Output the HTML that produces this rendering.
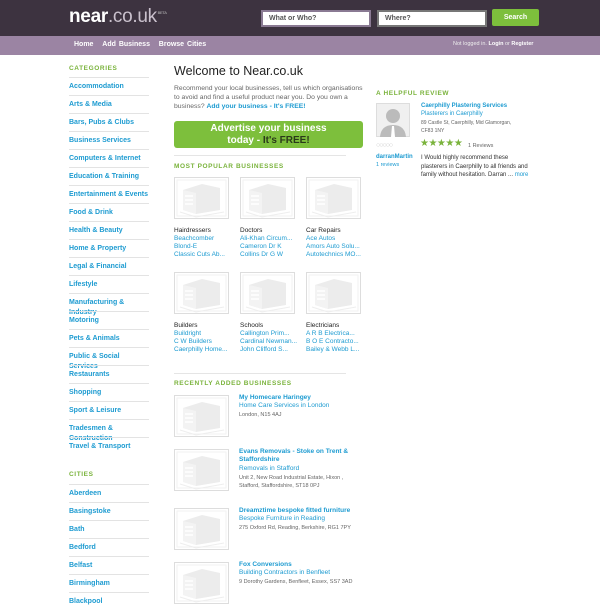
<!DOCTYPE html><html><head><style>
*{margin:0;padding:0;box-sizing:border-box}
body{width:600px;height:600px;overflow:hidden;background:#fff;font-family:"Liberation Sans",Arial,sans-serif;font-size:7px;color:#333;position:relative}
.a{position:absolute}
.hdr{left:0;top:0;width:600px;height:36px;background:#3d3340}
.nav{left:0;top:36px;width:600px;height:19px;background:#9b84a3}
.blue{color:#1d9bd1}
.sb{left:69px;width:80px}
.sb div{position:absolute;left:0;width:80px;font-weight:bold;color:#1d9bd1;font-size:7px;line-height:10px;white-space:normal}
.ln{position:absolute;left:69px;width:80px;height:1px;background:#e3e3e3}
.green{color:#7ab33c;font-weight:bold;font-size:6.5px;letter-spacing:.6px}
.t{position:absolute;font-size:6.5px;line-height:8px;white-space:nowrap}
</style></head><body>
<div class="a hdr"></div>
<div class="a" style="left:69px;top:6px;font-size:19px;color:#fff;letter-spacing:-.3px"><b>near</b><span style="color:#c9c0cc">.co.uk</span><sup style="font-size:4px;color:#bbb;vertical-align:top;position:relative;top:4px"> BETA</sup></div>
<div class="a" style="left:261px;top:10px;width:110px;height:17px;background:#fff;border:2px solid #8a7a93;font-size:7px;font-weight:bold;color:#555;padding:3px 6px">What or Who?</div>
<div class="a" style="left:377px;top:10px;width:110px;height:17px;background:#fff;border:2px solid #777;font-size:7px;font-weight:bold;color:#555;padding:3px 6px">Where?</div>
<div class="a" style="left:492px;top:9px;width:47px;height:17px;background:#7dbf3c;border-radius:2px;color:#fff;font-weight:bold;font-size:7px;text-align:center;line-height:17px">Search</div>
<div class="a nav"></div>
<div class="a" style="left:74px;top:41px;color:#fff;font-weight:bold;font-size:7px;word-spacing:1px">Home &nbsp;&nbsp;Add Business &nbsp;&nbsp;Browse Cities</div>
<div class="a" style="left:453px;top:41px;color:#eee;font-size:5.5px">Not logged in. <b style="color:#fff">Login</b> or <b style="color:#fff">Register</b></div>

<div class="a green" style="left:69px;top:65px">CATEGORIES</div>
<div class="a sb" style="top:0">
<div style="top:82px">Accommodation</div><div style="top:100px">Arts &amp; Media</div><div style="top:118px">Bars, Pubs &amp; Clubs</div><div style="top:136px">Business Services</div><div style="top:154px">Computers &amp; Internet</div><div style="top:172px">Education &amp; Training</div><div style="top:190px">Entertainment &amp; Events</div><div style="top:208px">Food &amp; Drink</div><div style="top:226px">Health &amp; Beauty</div><div style="top:244px">Home &amp; Property</div><div style="top:262px">Legal &amp; Financial</div><div style="top:280px">Lifestyle</div><div style="top:298px">Manufacturing &amp; Industry</div><div style="top:316px">Motoring</div><div style="top:334px">Pets &amp; Animals</div><div style="top:352px">Public &amp; Social Services</div><div style="top:370px">Restaurants</div><div style="top:388px">Shopping</div><div style="top:406px">Sport &amp; Leisure</div><div style="top:424px">Tradesmen &amp; Construction</div><div style="top:442px">Travel &amp; Transport</div>
<div style="top:489px">Aberdeen</div><div style="top:507px">Basingstoke</div><div style="top:525px">Bath</div><div style="top:543px">Bedford</div><div style="top:561px">Belfast</div><div style="top:579px">Birmingham</div><div style="top:597px">Blackpool</div>
</div>
<div class="ln" style="top:77px"></div><div class="ln" style="top:95px"></div><div class="ln" style="top:113px"></div><div class="ln" style="top:131px"></div><div class="ln" style="top:149px"></div><div class="ln" style="top:167px"></div><div class="ln" style="top:185px"></div><div class="ln" style="top:203px"></div><div class="ln" style="top:221px"></div><div class="ln" style="top:239px"></div><div class="ln" style="top:257px"></div><div class="ln" style="top:275px"></div><div class="ln" style="top:293px"></div><div class="ln" style="top:311px"></div><div class="ln" style="top:329px"></div><div class="ln" style="top:347px"></div><div class="ln" style="top:365px"></div><div class="ln" style="top:383px"></div><div class="ln" style="top:401px"></div><div class="ln" style="top:419px"></div><div class="ln" style="top:437px"></div>
<div class="a green" style="left:69px;top:471px">CITIES</div>
<div class="ln" style="top:484px"></div><div class="ln" style="top:502px"></div><div class="ln" style="top:520px"></div><div class="ln" style="top:538px"></div><div class="ln" style="top:556px"></div><div class="ln" style="top:574px"></div><div class="ln" style="top:592px"></div>

<div class="a" style="left:174px;top:64px;font-size:12.5px;color:#222">Welcome to Near.co.uk</div>
<div class="a" style="left:174px;top:84px;width:192px;font-size:6.8px;line-height:9px;color:#666">Recommend your local businesses, tell us which organisations to avoid and find a useful product near you. Do you own a business? <b class="blue">Add your business - It's FREE!</b></div>
<div class="a" style="left:174px;top:121px;width:189px;height:27px;background:#7dbf3c;border-radius:3px;color:#fff;font-weight:bold;font-size:10px;line-height:11.5px;text-align:center;padding-top:2px">Advertise your business<br>today - <span style="color:#2a3a1a">It's FREE!</span></div>
<div class="a" style="left:174px;top:155px;width:172px;height:1px;background:#e5e5e5"></div>
<div class="a green" style="left:174px;top:163px">MOST POPULAR BUSINESSES</div>

<svg width="0" height="0" style="position:absolute"><defs><g id="b"><rect x="0.5" y="0.5" width="54" height="41" fill="#fff" stroke="#ddd"/><rect x="3" y="3" width="49" height="36" fill="none" stroke="#f2f2f2"/><path d="M9 13 L28 7 L46 11 L46 33 L22 37 L9 33 Z" fill="#ececec"/><path d="M9 13 L22 16 L22 37 L9 33 Z" fill="#f3f3f3"/><path d="M11 19h8M11 23h8M11 27h8" stroke="#fff" stroke-width="1.5"/><path d="M6 35 L22 40 L50 35" stroke="#eee" fill="none"/></g></defs></svg>
<svg class="a" style="left:174px;top:177px" width="55" height="42"><use href="#b"/></svg>
<svg class="a" style="left:240px;top:177px" width="55" height="42"><use href="#b"/></svg>
<svg class="a" style="left:306px;top:177px" width="55" height="42"><use href="#b"/></svg>
<div class="t" style="left:174px;top:227px;color:#222">Hairdressers</div><div class="t blue" style="left:174px;top:235px">Beachcomber</div><div class="t blue" style="left:174px;top:243px">Blond-E</div><div class="t blue" style="left:174px;top:251px">Classic Cuts Ab...</div>
<div class="t" style="left:240px;top:227px;color:#222">Doctors</div><div class="t blue" style="left:240px;top:235px">Ali-Khan Circum...</div><div class="t blue" style="left:240px;top:243px">Cameron Dr K</div><div class="t blue" style="left:240px;top:251px">Collins Dr G W</div>
<div class="t" style="left:306px;top:227px;color:#222">Car Repairs</div><div class="t blue" style="left:306px;top:235px">Ace Autos</div><div class="t blue" style="left:306px;top:243px">Amors Auto Solu...</div><div class="t blue" style="left:306px;top:251px">Autotechnics MO...</div>
<svg class="a" style="left:174px;top:272px" width="55" height="42"><use href="#b"/></svg>
<svg class="a" style="left:240px;top:272px" width="55" height="42"><use href="#b"/></svg>
<svg class="a" style="left:306px;top:272px" width="55" height="42"><use href="#b"/></svg>
<div class="t" style="left:174px;top:322px;color:#222">Builders</div><div class="t blue" style="left:174px;top:330px">Buildright</div><div class="t blue" style="left:174px;top:338px">C W Builders</div><div class="t blue" style="left:174px;top:346px">Caerphilly Home...</div>
<div class="t" style="left:240px;top:322px;color:#222">Schools</div><div class="t blue" style="left:240px;top:330px">Callington Prim...</div><div class="t blue" style="left:240px;top:338px">Cardinal Newman...</div><div class="t blue" style="left:240px;top:346px">John Clifford S...</div>
<div class="t" style="left:306px;top:322px;color:#222">Electricians</div><div class="t blue" style="left:306px;top:330px">A R B Electrica...</div><div class="t blue" style="left:306px;top:338px">B O E Contracto...</div><div class="t blue" style="left:306px;top:346px">Bailey &amp; Webb L...</div>
<div class="a" style="left:174px;top:373px;width:172px;height:1px;background:#e5e5e5"></div>
<div class="a green" style="left:174px;top:380px">RECENTLY ADDED BUSINESSES</div>

<svg class="a" style="left:174px;top:395px" width="55" height="42"><use href="#b"/></svg>
<div class="t blue" style="left:239px;top:394px;font-weight:bold">My Homecare Haringey</div><div class="t blue" style="left:239px;top:402px">Home Care Services in London</div><div class="t" style="left:239px;top:411px;color:#666;font-size:5.5px">London, N15 4AJ</div>
<svg class="a" style="left:174px;top:449px" width="55" height="42"><use href="#b"/></svg>
<div class="t blue" style="left:239px;top:448px;font-weight:bold">Evans Removals - Stoke on Trent &amp;</div><div class="t blue" style="left:239px;top:456px;font-weight:bold">Staffordshire</div><div class="t blue" style="left:239px;top:465px">Removals in Stafford</div><div class="t" style="left:239px;top:474px;color:#666;font-size:5.5px">Unit 2, New Road Industrial Estate, Hixon ,</div><div class="t" style="left:239px;top:482px;color:#666;font-size:5.5px">Stafford, Staffordshire, ST18 0PJ</div>
<svg class="a" style="left:174px;top:508px" width="55" height="42"><use href="#b"/></svg>
<div class="t blue" style="left:239px;top:507px;font-weight:bold">Dreamztime bespoke fitted furniture</div><div class="t blue" style="left:239px;top:515px">Bespoke Furniture in Reading</div><div class="t" style="left:239px;top:524px;color:#666;font-size:5.5px">275 Oxford Rd, Reading, Berkshire, RG1 7PY</div>
<svg class="a" style="left:174px;top:562px" width="55" height="42"><use href="#b"/></svg>
<div class="t blue" style="left:239px;top:561px;font-weight:bold">Fox Conversions</div><div class="t blue" style="left:239px;top:569px">Building Contractors in Benfleet</div><div class="t" style="left:239px;top:578px;color:#666;font-size:5.5px">9 Dorothy Gardens, Benfleet, Essex, SS7 3AD</div>

<div class="a green" style="left:376px;top:90px">A HELPFUL REVIEW</div>
<svg class="a" style="left:376px;top:103px" width="34" height="34"><rect x=".5" y=".5" width="33" height="33" fill="#f0f0f0" stroke="#ddd"/><circle cx="17" cy="13" r="7" fill="#bbb"/><path d="M4 34 Q5 22 17 22 Q29 22 30 34Z" fill="#bbb"/><path d="M16 23 L18 23 L19 34 L15 34Z" fill="#fff"/></svg>
<div class="t" style="left:376px;top:142px;color:#ccc;font-size:7px;letter-spacing:-1px">○○○○○</div>
<div class="t blue" style="left:376px;top:153px;font-weight:bold;font-size:6px">darranMartin</div>
<div class="t blue" style="left:376px;top:161px;font-size:5.5px">1 reviews</div>
<div class="t blue" style="left:421px;top:102px;font-weight:bold;font-size:6px">Caerphilly Plastering Services</div>
<div class="t blue" style="left:421px;top:110px;font-size:6px">Plasterers in Caerphilly</div>
<div class="t" style="left:421px;top:119px;color:#666;font-size:5px">89 Castle St, Caerphilly, Mid Glamorgan,</div>
<div class="t" style="left:421px;top:127px;color:#666;font-size:5px">CF83 1NY</div>
<div class="t" style="left:420px;top:140px;color:#7ab33c;font-size:10px;letter-spacing:-.5px">★★★★★</div>
<div class="t" style="left:468px;top:142px;color:#666;font-size:5.5px">1 Reviews</div>
<div class="a" style="left:421px;top:154px;width:115px;font-size:6px;line-height:8.5px;color:#333">I Would highly recommend these plasterers in Caerphilly to all friends and family without hesitation. Darran ... <span class="blue">more</span></div>
</body></html>
